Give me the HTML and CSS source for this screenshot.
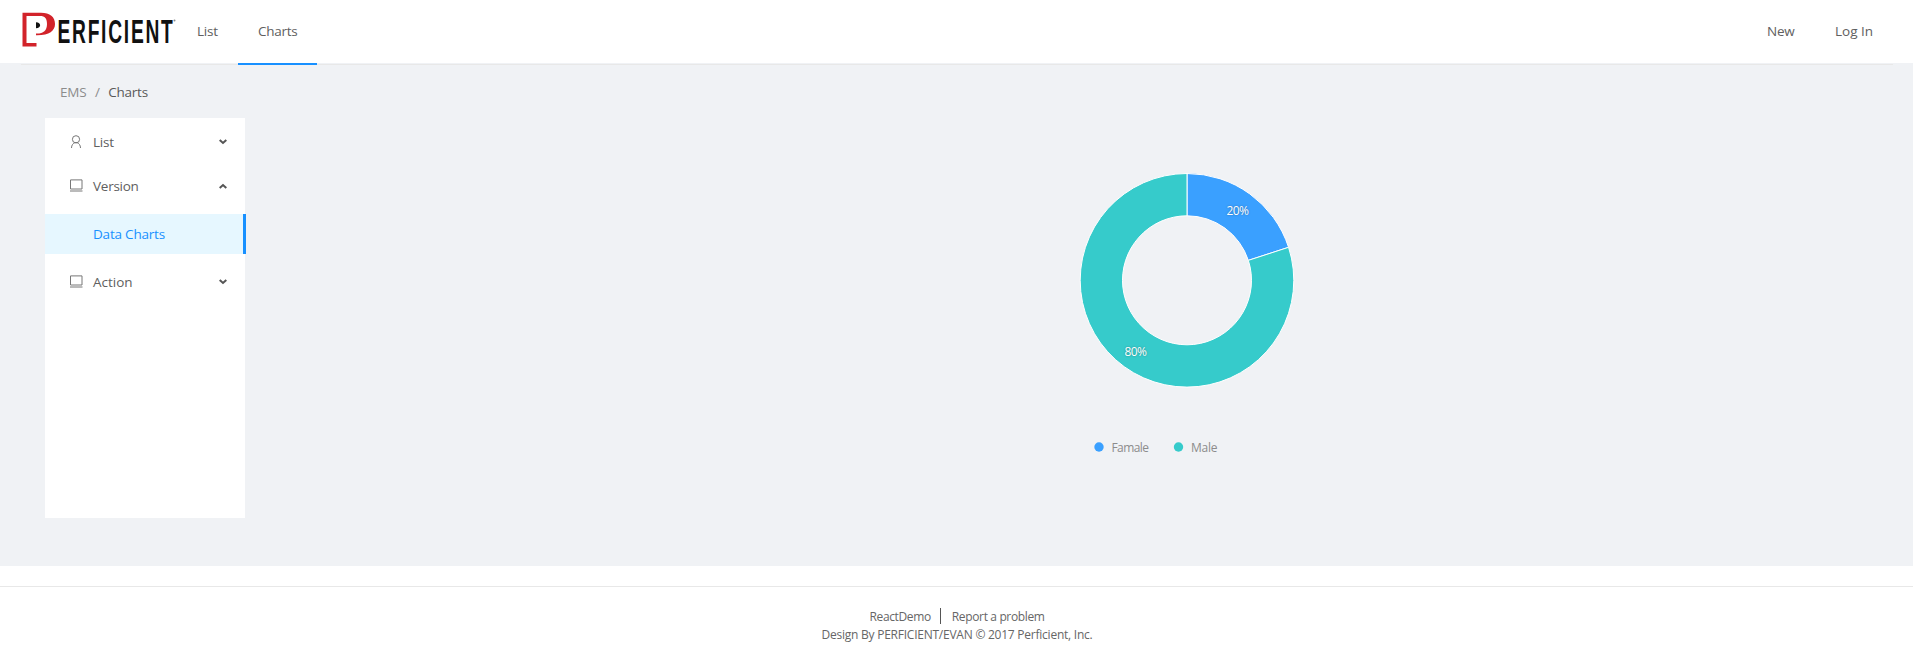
FILE: index.html
```html
<!DOCTYPE html>
<html lang="en">
<head>
<meta charset="utf-8">
<title>EMS Charts</title>
<link rel="stylesheet" href="styles.css">
</head>
<body>
<header class="header">
  <svg class="logo" width="156" height="50" viewBox="21 5 156 50" role="img" aria-label="Perficient">
    <path d="M22.5 12.800H41C50 12.800 55 17 55 24C55 31 49 35.500 36 35.200V33.500C43 33.800 47 31 47 24C47 18.500 45 16 40 16H26.500V43H36.500V46.500H22.500Z" fill="#d2232a"/>
    <path d="M36 22.200C41.500 22.200 41.500 28.200 36 28.200Z" fill="#111"/>
    <text class="logo-text" x="57.500" y="43" textLength="117" lengthAdjust="spacingAndGlyphs">ERFICIENT</text>
    <circle cx="174.500" cy="20.500" r="1" fill="#888"/>
  </svg>
  <nav class="nav">
    <a class="nav-item nav-list">List</a>
    <a class="nav-item nav-charts active">Charts</a>
    <a class="nav-item nav-new">New</a>
    <a class="nav-item nav-login">Log In</a>
  </nav>
</header>
<main class="content">
  <div class="breadcrumb"><span>EMS</span><span class="slash">/</span><span class="current">Charts</span></div>
  <div class="body">
    <aside class="sidebar">
      <div class="item">
        <svg class="icon" width="14" height="14" viewBox="0 0 14 14"><circle cx="7" cy="4.300" r="3.600"/><path d="M2.500 13C2.500 10.200 4 8.500 5.500 7.900L7 7.500L8.500 7.900C10 8.500 11.500 10.200 11.500 13"/></svg>
        <span>List</span>
        <svg class="arrow" width="10" height="8" viewBox="0 0 10 8"><path d="M1.700 2L5 5L8.300 2"/></svg>
      </div>
      <div class="item">
        <svg class="icon" width="14" height="14" viewBox="0 0 14 14"><path d="M1.500 0.900H13V10H1.500ZM1 12H13.500"/></svg>
        <span>Version</span>
        <svg class="arrow" width="10" height="8" viewBox="0 0 10 8"><path d="M1.700 6L5 3L8.300 6"/></svg>
      </div>
      <div class="item selected"><span>Data Charts</span></div>
      <div class="item">
        <svg class="icon" width="14" height="14" viewBox="0 0 14 14"><path d="M1.500 0.900H13V10H1.500ZM1 12H13.500"/></svg>
        <span class="action">Action</span>
        <svg class="arrow" width="10" height="8" viewBox="0 0 10 8"><path d="M1.700 2L5 5L8.300 2"/></svg>
      </div>
    </aside>
    <svg class="chart" width="240" height="320" viewBox="1067 160 240 320">
      <path class="slice" fill="#3aa0ff" d="M1187 173.500A106.800 106.800 0 0 1 1288.570 247.300L1248.340 260.370A64.500 64.500 0 0 0 1187 215.800Z"/>
      <path class="slice" fill="#36cbcb" d="M1288.570 247.300A106.800 106.800 0 1 1 1187 173.500V215.800A64.500 64.500 0 1 0 1248.340 260.370Z"/>
      <text class="label" x="1226.500" y="215" textLength="22.500">20%</text>
      <text class="label" x="1124.500" y="356" textLength="22.500">80%</text>
      <circle cx="1099" cy="447" r="4.700" fill="#3aa0ff"/>
      <text class="legend" x="1111.500" y="452" textLength="37.500">Famale</text>
      <circle cx="1178.500" cy="447" r="4.700" fill="#36cbcb"/>
      <text class="legend" x="1191" y="452" textLength="26.500">Male</text>
    </svg>
  </div>
</main>
<footer class="footer">
  <div class="links"><a class="demo">ReactDemo</a><i class="divider"></i><a class="report">Report a problem</a></div>
  <div class="copyright">Design By PERFICIENT/EVAN © 2017 Perficient, Inc.</div>
</footer>
</body>
</html>
```
FILE: styles.css
```css
* { box-sizing: border-box; }
body {
  margin: 0;
  background: #fff;
  color: #606060;
  font: 13.5px/20px "Open Sans", "Noto Sans", sans-serif;
  letter-spacing: -0.25px;
}
a, span, text { white-space: nowrap; }
.header { position: relative; z-index: 1; display: flex; height: 65px; margin: 0 20px -2px 21px; border-bottom: 1px solid #e8e8e8; }
.logo { flex: none; margin-top: 5px; overflow: visible; }
.logo-text { font: bold 33px "Liberation Sans Narrow", "Liberation Sans", sans-serif; fill: #111; letter-spacing: 3px; }
.nav { display: flex; flex: 1; height: 65px; }
.nav-item { height: 65px; padding: 21px 20px 0; }
.nav-list { width: 61px; }
.nav-charts { width: 79px; }
.active { border-bottom: 2px solid #1890ff; }
.nav-new { width: 68px; margin-left: auto; }
.nav-login { width: 78px; letter-spacing: 0; }
.content { height: 503px; padding: 19px 45px 0; background: #f0f2f5; }
.breadcrumb { display: flex; height: 36px; padding-left: 15px; color: #8c8c8c; }
.slash { width: 22px; text-align: center; }
.current { color: #595959; }
.body { display: flex; }
.sidebar { width: 200px; height: 400px; padding-top: 4px; background: #fff; }
.item { display: flex; align-items: center; height: 40px; margin-bottom: 4px; padding: 0 17px 0 24px; }
.icon { margin-right: 10px; fill: none; stroke: #777; stroke-width: 1; }
.arrow { margin-left: auto; fill: none; stroke: #555; stroke-width: 2; }
.action { letter-spacing: 0; }
.selected { width: 201px; margin: 8px 0; padding: 0 0 0 48px; background: #e6f7ff; border-right: 3px solid #1890ff; color: #1890ff; letter-spacing: -0.2px; }
.chart { margin: 42px 0 0 822px; }
.slice { stroke: #fff; stroke-width: 1; }
.label { fill: #fff; font-size: 12px; letter-spacing: 0; text-shadow: 0 0 2px rgba(0,0,0,.35); }
.legend { fill: #8c8c8c; font-size: 12px; letter-spacing: 0; }
.footer { margin-top: 20px; padding-top: 21px; border-top: 1px solid #e8e8e8; color: #666; font-size: 12px; line-height: 18px; }
.links { display: flex; justify-content: center; height: 18px; padding-left: 1px; letter-spacing: -0.36px; }
.divider { width: 1px; height: 16px; margin: 0 11px 0 9px; background: #555; }
.copyright { padding-left: 1px; text-align: center; letter-spacing: -0.24px; }
```
